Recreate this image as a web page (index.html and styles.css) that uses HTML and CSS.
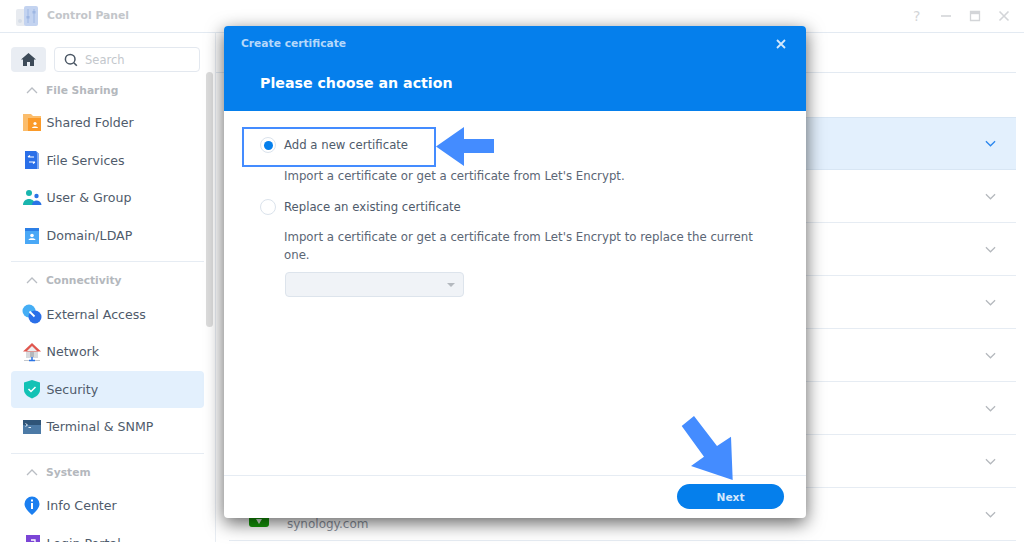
FILE: index.html
```html
<!DOCTYPE html>
<html lang="en">
  <head>
    <meta charset="UTF-8" />
    <title>Control Panel</title>
    <link rel="stylesheet" href="styles.css">
  </head>
  <body>
    <div class="window">
      <div class="titlebar">
        <svg class="app-icon" width="22" height="20" viewBox="0 0 22 20">
          <rect x="0" y="3" width="10" height="17" rx="2" fill="#e8ebf0" />
          <rect x="8" y="0" width="14" height="20" rx="2" fill="#c3d3f0" />
          <path d="M12 3v14M18 3v14" stroke="#a6bde6" stroke-width="1.2" />
          <rect x="10.500" y="10" width="3" height="2.500" fill="#9db6e2" />
          <rect x="16.500" y="5" width="3" height="2.500" fill="#9db6e2" />
          <circle cx="4" cy="15" r="2" fill="#d6dde7" />
        </svg>
        <span class="app-title">Control Panel</span>
        <div class="win-btns">
          <span class="help">?</span>
          <svg width="12" height="12" viewBox="0 0 12 12"><path d="M1 6h10" stroke="#d3d5d8" stroke-width="1.6" /></svg>
          <svg width="12" height="12" viewBox="0 0 12 12"><path d="M1.500 1.500h9v9h-9z" fill="none" stroke="#d3d5d8" stroke-width="1.3" /><path d="M1 3h10" stroke="#d3d5d8" stroke-width="2.4" /></svg>
          <svg width="12" height="12" viewBox="0 0 12 12"><path d="M1.500 1.500l9 9M10.500 1.500l-9 9" stroke="#d3d5d8" stroke-width="1.6" /></svg>
        </div>
      </div>

      <div class="main">
        <aside class="sidebar">
          <div class="side-top">
            <div class="home">
              <svg width="15" height="13" viewBox="0 0 15 13"><path d="M7.500 0L0 6.500h2V13h4V9h3v4h4V6.500h2z" fill="#3d4a58" /></svg>
            </div>
            <div class="search">
              <svg width="14" height="14" viewBox="0 0 14 14"><circle cx="6.200" cy="6.200" r="4.800" fill="none" stroke="#4a5664" stroke-width="1.5" /><path d="M9.800 9.800l3 3" stroke="#4a5664" stroke-width="1.6" /></svg>
              <span>Search</span>
            </div>
          </div>
          <div class="scrollbar"></div>

          <div class="section-head">
            <svg class="caret" width="12" height="7" viewBox="0 0 12 7"><path d="M1 6l5-5 5 5" fill="none" stroke="#b9bdc3" stroke-width="1.3" /></svg>
            File Sharing
          </div>
          <div class="nav-item">
            <svg width="20" height="20" viewBox="0 0 20 20"><path d="M1 1h8l2 2h8v15H1z" fill="#fbbd6c" /><rect x="6" y="5" width="13" height="13" fill="#fb9a28" /><circle cx="13" cy="10.500" r="1.600" fill="#fff" /><path d="M10 15c0-2 6-2 6 0z" fill="#fff" /></svg>
            Shared Folder
          </div>
          <div class="nav-item">
            <svg width="20" height="20" viewBox="0 0 20 20"><path d="M3 1h11l3 3v15H3z" fill="#2a6fe8" /><path d="M14 1l3 3v15h-2V3z" fill="#7ea8f0" /><path d="M6 7h6M6 7l2-1.500M13 12H7M13 12l-2 1.500" stroke="#fff" stroke-width="1.200" fill="none" /></svg>
            File Services
          </div>
          <div class="nav-item">
            <svg width="20" height="20" viewBox="0 0 20 20"><circle cx="7" cy="5" r="3" fill="#19b5ae" /><path d="M1 17c0-8 12-8 12 0z" fill="#19b5ae" /><circle cx="14.500" cy="8" r="2.200" fill="#2a74e6" /><path d="M10 17c0-6 9-6 9.500 0z" fill="#2a74e6" /></svg>
            User &amp; Group
          </div>
          <div class="nav-item">
            <svg width="20" height="20" viewBox="0 0 20 20"><path d="M3 2h14v16H3z" fill="#4aa8f6" /><path d="M3 2h14v3H3z" fill="#2c7fe6" /><circle cx="10" cy="9.500" r="1.800" fill="#fff" /><path d="M6.500 14c0-2.500 7-2.500 7 0z" fill="#fff" /></svg>
            Domain/LDAP
          </div>
          <div class="divider"></div>

          <div class="section-head">
            <svg class="caret" width="12" height="7" viewBox="0 0 12 7"><path d="M1 6l5-5 5 5" fill="none" stroke="#b9bdc3" stroke-width="1.3" /></svg>
            Connectivity
          </div>
          <div class="nav-item">
            <svg width="20" height="20" viewBox="0 0 20 20"><circle cx="7" cy="7" r="6.500" fill="#45aef5" /><circle cx="13" cy="13" r="6.500" fill="#2a6fe8" /><path d="M7.500 7.500l5 5" stroke="#fff" stroke-width="1.800" /></svg>
            External Access
          </div>
          <div class="nav-item">
            <svg width="20" height="20" viewBox="0 0 20 20"><path d="M4 9h12v7H4z" fill="#d8dadd" /><path d="M10 1L1 9.500h18z" fill="#e0564e" /><path d="M10 4L5 9h10z" fill="#eceef0" /><rect x="8" y="10" width="4" height="5" fill="#b4b8bd" /><path d="M2 18.500h16" stroke="#c4c8cc" stroke-width="1" /><path d="M10 15v3.500M7 18.500h6" stroke="#2a74e6" stroke-width="1.500" /></svg>
            Network
          </div>
          <div class="nav-item active">
            <svg width="20" height="20" viewBox="0 0 20 20"><path d="M10 1l8 2.500V11c0 4-4 7-8 8.500C6 18 2 15 2 11V3.500z" fill="#13c2b5" /><path d="M6.500 10l2.500 2.500 4.500-4.500" fill="none" stroke="#fff" stroke-width="1.500" /></svg>
            Security
          </div>
          <div class="nav-item">
            <svg width="20" height="20" viewBox="0 0 20 20"><rect x="1" y="3" width="18" height="14" fill="#4c7aa6" /><rect x="1" y="3" width="18" height="5" fill="#2f5478" /><path d="M3.500 6.500l2 1.500-2 1.500M6.500 10.500h2.500" fill="none" stroke="#e4edf5" stroke-width="1" /></svg>
            Terminal &amp; SNMP
          </div>
          <div class="divider"></div>

          <div class="section-head">
            <svg class="caret" width="12" height="7" viewBox="0 0 12 7"><path d="M1 6l5-5 5 5" fill="none" stroke="#b9bdc3" stroke-width="1.3" /></svg>
            System
          </div>
          <div class="nav-item">
            <svg width="20" height="20" viewBox="0 0 20 20"><path d="M10 19C6 15 2.500 12 2.500 8a7.500 7.500 0 0 1 15 0c0 4-3.500 7-7.500 11z" fill="#1b7ff0" /><rect x="9" y="7" width="2" height="6" fill="#fff" /><rect x="9" y="3.500" width="2" height="2" fill="#fff" /></svg>
            Info Center
          </div>
          <div class="nav-item">
            <svg width="20" height="20" viewBox="0 0 20 20"><rect x="4" y="2" width="14" height="16" fill="#7b45d6" /><path d="M9 7h4v4" fill="none" stroke="#fff" stroke-width="1.300" /></svg>
            Login Portal
          </div>
        </aside>

        <div class="content">
          <div class="tabs"></div>
          <div class="toolbar"></div>
          <div class="row selected"><svg class="chev" width="11" height="7" viewBox="0 0 12 7"><path d="M1 1l5 5 5-5" fill="none" stroke="#2a86ee" stroke-width="1.400" /></svg></div>
          <div class="row"><svg class="chev" width="11" height="7" viewBox="0 0 12 7"><path d="M1 1l5 5 5-5" fill="none" stroke="#b4b8bd" stroke-width="1.300" /></svg></div>
          <div class="row"><svg class="chev" width="11" height="7" viewBox="0 0 12 7"><path d="M1 1l5 5 5-5" fill="none" stroke="#b4b8bd" stroke-width="1.300" /></svg></div>
          <div class="row"><svg class="chev" width="11" height="7" viewBox="0 0 12 7"><path d="M1 1l5 5 5-5" fill="none" stroke="#b4b8bd" stroke-width="1.300" /></svg></div>
          <div class="row"><svg class="chev" width="11" height="7" viewBox="0 0 12 7"><path d="M1 1l5 5 5-5" fill="none" stroke="#b4b8bd" stroke-width="1.300" /></svg></div>
          <div class="row"><svg class="chev" width="11" height="7" viewBox="0 0 12 7"><path d="M1 1l5 5 5-5" fill="none" stroke="#b4b8bd" stroke-width="1.300" /></svg></div>
          <div class="row"><svg class="chev" width="11" height="7" viewBox="0 0 12 7"><path d="M1 1l5 5 5-5" fill="none" stroke="#b4b8bd" stroke-width="1.300" /></svg></div>
          <div class="row last">
            <div class="cert-icon"></div>
            <span class="cert-name">synology.com</span>
            <svg class="chev" width="11" height="7" viewBox="0 0 12 7"><path d="M1 1l5 5 5-5" fill="none" stroke="#b4b8bd" stroke-width="1.300" /></svg>
          </div>
        </div>
      </div>
    </div>

    <div class="modal">
      <div class="modal-head">
        <div class="modal-title-row">
          <span class="modal-title">Create certificate</span>
          <svg width="10" height="10" viewBox="0 0 10 10"><path d="M1 1l8 8M9 1l-8 8" stroke="#d5e8fc" stroke-width="1.800" /></svg>
        </div>
        <h2>Please choose an action</h2>
      </div>
      <div class="modal-body">
        <label class="radio-row">
          <span class="radio checked"></span>
          Add a new certificate
        </label>
        <p class="hint first-hint">Import a certificate or get a certificate from Let's Encrypt.</p>
        <label class="radio-row second">
          <span class="radio"></span>
          Replace an existing certificate
        </label>
        <p class="hint second-hint">Import a certificate or get a certificate from Let's Encrypt to replace the current one.</p>
        <div class="select"><span class="select-arrow"></span></div>
      </div>
      <div class="modal-foot">
        <button class="next">Next</button>
      </div>
    </div>

    <!-- annotations drawn on top of the screenshot -->
    <div class="mark-box"></div>
    <svg class="mark-arrow left-arrow" width="58" height="39" viewBox="0 0 58 39"><path d="M0 19.500L28 0v12h30v14H28v13z" fill="#448cff" /></svg>
    <svg class="mark-arrow down-arrow" width="53" height="65" viewBox="0 0 53 65"><path d="M.7 10L13 0l23 30 14-9.300L51.700 64 10 50l13-9.300z" fill="#448cff" /></svg>
  </body>
</html>
```

FILE: styles.css
```css
* {
  box-sizing: border-box;
}
html,
body {
  height: 100%;
}
body {
  margin: 0;
  font-family: "DejaVu Sans", Verdana, sans-serif;
  font-size: 12px;
  color: #4b5767;
  background-color: #fff;
  overflow: hidden;
}
.window {
  height: 544px;
  display: flex;
  flex-direction: column;
}
.titlebar {
  height: 33px;
  flex: none;
  display: flex;
  align-items: center;
  padding: 0 14px 0 16px;
  border-bottom: 1px solid #e3eaf2;
}
.app-icon {
  margin-right: 9px;
}
.app-title {
  font-size: 10.8px;
  font-weight: bold;
  color: #c3c6ca;
  margin-top: -2px;
}
.win-btns {
  margin-left: auto;
  display: flex;
  align-items: center;
  gap: 17px;
}
.help {
  font-size: 14px;
  color: #d3d5d8;
  width: 10px;
}
.main {
  flex: 1;
  display: flex;
  min-height: 0;
}
.sidebar {
  position: relative;
  width: 216px;
  flex: none;
  height: 509px;
  padding: 14px 11px 0;
  border-right: 1px solid #e8edf3;
  overflow: hidden;
}
.side-top {
  display: flex;
  gap: 8px;
  width: 189px;
}
.home {
  width: 35px;
  height: 25px;
  background-color: #e9edf3;
  border-radius: 4px;
  display: flex;
  align-items: center;
  justify-content: center;
}
.search {
  flex: 1;
  height: 25px;
  border: 1px solid #e3e8ef;
  border-radius: 4px;
  display: flex;
  align-items: center;
  gap: 7px;
  padding-left: 9px;
  font-size: 11.5px;
  color: #c3c7cc;
}
.scrollbar {
  position: absolute;
  left: 206px;
  top: 39px;
  width: 7px;
  height: 255px;
  background-color: #dcdcdc;
  border-radius: 4px;
}
.section-head {
  height: 37px;
  width: 193px;
  display: flex;
  align-items: center;
  font-size: 10.7px;
  font-weight: bold;
  color: #b4b8bd;
  padding-left: 15px;
  gap: 8px;
}
.sidebar .section-head:nth-child(3) {
  height: 36px;
}
.nav-item {
  height: 37.6px;
  width: 193px;
  display: flex;
  align-items: center;
  gap: 4.500px;
  padding-left: 11px;
  border-radius: 4px;
  font-size: 12.6px;
  color: #4f5b6b;
}
.nav-item.active {
  background-color: #e3f0fd;
}
.divider {
  width: 193px;
  height: 1px;
  background-color: #e6ecf3;
  margin-top: 7px;
}
.section-head + .nav-item {
  margin-top: -4px;
}
.content {
  flex: 1;
  min-width: 0;
  padding-right: 8px;
}
.tabs {
  height: 40px;
  border-bottom: 1px solid #e3eaf2;
}
.toolbar {
  height: 44px;
}
.row {
  height: 53px;
  margin-left: 13px;
  display: flex;
  align-items: center;
  justify-content: flex-end;
  padding-right: 20px;
  border-bottom: 1px solid #e6ecf3;
  position: relative;
}
.row.selected {
  background-color: #e3f0fd;
  border-top: 1px solid #d8e6f4;
  border-bottom: 1px solid #d8e6f4;
}
.row.last {
  justify-content: flex-start;
}
.row.last .chev {
  margin-left: auto;
}
.cert-icon {
  position: relative;
  width: 20px;
  height: 24px;
  margin-left: 20px;
  margin-top: 2px;
  background-color: #169c0a;
  border-radius: 3px;
}
.cert-icon::after {
  content: "";
  position: absolute;
  left: 7px;
  top: 16px;
  border-left: 3px solid transparent;
  border-right: 3px solid transparent;
  border-top: 5px solid #e8f5e6;
}
.cert-name {
  margin-left: 18px;
  margin-top: 19px;
  font-size: 12px;
  color: #8c93a0;
}
.modal {
  position: absolute;
  left: 224px;
  top: 26px;
  width: 582px;
  height: 492px;
  background-color: #fff;
  border-radius: 4px;
  box-shadow: 0 5px 18px rgba(0, 0, 0, 0.62);
  display: flex;
  flex-direction: column;
  overflow: hidden;
}
.modal-head {
  height: 85px;
  flex: none;
  background-color: #057fec;
  color: #fff;
}
.modal-title-row {
  display: flex;
  align-items: center;
  justify-content: space-between;
  padding: 11px 20px 0 17px;
}
.modal-title {
  font-size: 10.7px;
  font-weight: bold;
  color: #b5d8fa;
}
.modal-head h2 {
  margin: 24px 0 0 36px;
  font-size: 14.200px;
  line-height: 18px;
  font-weight: bold;
}
.modal-body {
  flex: 1;
  padding: 25px 20px 0 36px;
}
.radio-row {
  display: flex;
  align-items: center;
  gap: 8px;
  height: 18px;
  font-size: 11.700px;
  color: #4f5b6b;
}
.radio {
  width: 16px;
  height: 16px;
  border-radius: 50%;
  border: 1px solid #dbe3ec;
  background-color: #fff;
  position: relative;
}
.radio.checked::after {
  content: "";
  position: absolute;
  left: 2.500px;
  top: 2.500px;
  width: 9px;
  height: 9px;
  border-radius: 50%;
  background-color: #057fec;
}
.radio-row.second {
  margin-top: 13px;
}
.hint {
  margin: 0;
  padding-left: 24px;
  font-size: 11.750px;
  line-height: 18px;
  color: #5b6675;
}
.first-hint {
  margin-top: 13px;
}
.second-hint {
  margin-top: 12px;
  width: 520px;
}
.select {
  position: relative;
  margin: 8px 0 0 25px;
  width: 179px;
  height: 25px;
  background-color: #f0f3f7;
  border: 1px solid #dde4ec;
  border-radius: 4px;
}
.select-arrow {
  position: absolute;
  right: 8px;
  top: 10px;
  border-left: 4px solid transparent;
  border-right: 4px solid transparent;
  border-top: 4px solid #b4b9bf;
}
.modal-foot {
  height: 43px;
  flex: none;
  border-top: 1px solid #e6ecf3;
  display: flex;
  justify-content: flex-end;
  padding: 8px 22px 0 0;
}
.next {
  width: 107px;
  height: 25px;
  border: none;
  border-radius: 13px;
  background-color: #057fec;
  color: #d5e8fc;
  font-family: inherit;
  font-size: 10.600px;
  font-weight: bold;
  padding-top: 2px;
}
.mark-box {
  position: absolute;
  left: 242px;
  top: 127px;
  width: 194px;
  height: 40px;
  border: 2px solid #448cff;
}
.mark-arrow {
  position: absolute;
}
.left-arrow {
  left: 436px;
  top: 127px;
}
.down-arrow {
  left: 681px;
  top: 416px;
}
```
